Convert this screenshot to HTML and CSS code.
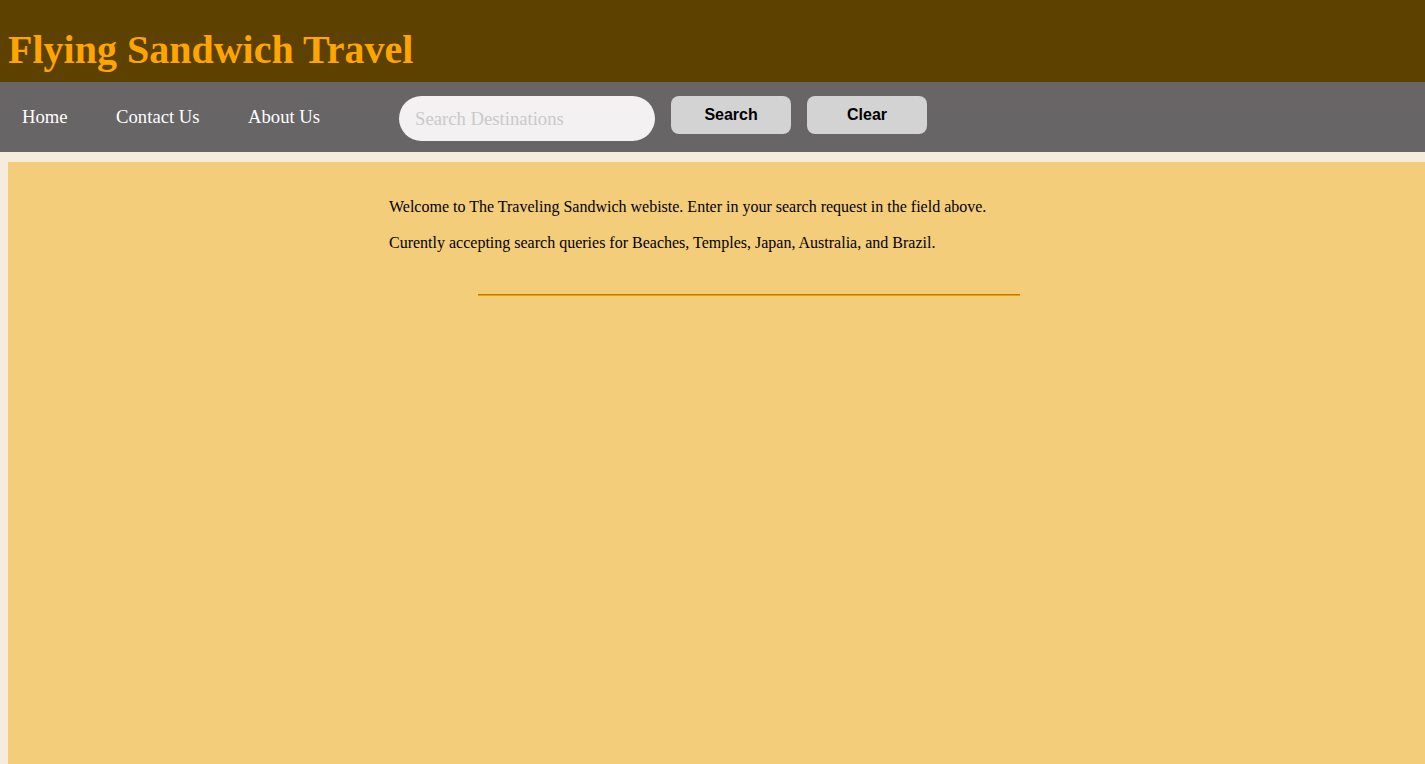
FILE: index.html
```html
<!DOCTYPE html>
<html lang="en">
<head>
<meta charset="utf-8">
<title>Flying Sandwich Travel</title>
<link rel="stylesheet" href="styles.css">
</head>
<body>
<header class="site-header">
  <h1 class="site-title">Flying Sandwich Travel</h1>
</header>
<nav class="navbar">
  <div class="nav-links">
    <a class="nav-link" href="#">Home</a>
    <a class="nav-link" href="#">Contact Us</a>
    <a class="nav-link" href="#">About Us</a>
  </div>
  <input class="search-input" type="text" placeholder="Search Destinations">
  <button class="btn" type="button">Search</button>
  <button class="btn" type="button">Clear</button>
</nav>
<main class="main">
  <div class="content">
    <p class="intro">Welcome to The Traveling Sandwich webiste. Enter in your search request in the field above.</p>
    <p class="intro">Curently accepting search queries for Beaches, Temples, Japan, Australia, and Brazil.</p>
    <hr class="divider">
  </div>
</main>
</body>
</html>
```
FILE: styles.css
```css
html, body {
  margin: 0;
  padding: 0;
  height: 100%;
}
body {
  background: #f5ecdc;
  font-family: "Liberation Serif", "Times New Roman", serif;
  overflow: hidden;
}
.site-header {
  background: #5d4100;
  height: 82px;
  box-sizing: border-box;
  padding: 27px 0 0 8px;
}
.site-title {
  margin: 0;
  font-size: 40px;
  font-weight: bold;
  line-height: 46px;
  color: #ffa500;
}
.navbar {
  background: #676566;
  height: 70px;
  box-sizing: border-box;
  padding: 14px 0 0 22px;
  display: flex;
  align-items: flex-start;
}
.nav-links {
  display: flex;
  gap: 48.5px;
  height: 42px;
  align-items: center;
  margin-right: 79px;
}
.nav-link {
  color: #ffffff;
  text-decoration: none;
  font-size: 18.67px;
}
.search-input {
  width: 256px;
  height: 45px;
  box-sizing: border-box;
  border: none;
  border-radius: 23px;
  background: #f3f1f2;
  padding: 0 16px;
  font-family: "Liberation Serif", "Times New Roman", serif;
  font-size: 18.67px;
  outline: none;
  margin-right: 16px;
}
.search-input::placeholder {
  color: #cbc9ca;
}
.btn {
  width: 120px;
  height: 38px;
  border: none;
  border-radius: 8px;
  background: #d3d3d3;
  color: #000;
  font-family: "Liberation Sans", Arial, sans-serif;
  font-weight: bold;
  font-size: 16px;
  margin-right: 16px;
  padding: 0;
}
.main {
  background: #f4cd7b;
  margin: 10px 0 0 8px;
  height: calc(100% - 162px);
  padding-top: 20px;
  box-sizing: border-box;
}
.content {
  margin-left: 381px;
}
.intro {
  margin: 18px 0 17px;
  font-size: 16px;
  color: #000;
}
.intro:first-child {
  margin-top: 16px;
}
.divider {
  margin: 42px 0 0 89px;
  width: 542px;
  height: 0;
  border: none;
  border-top: 1px solid #c07800;
  border-bottom: 1px solid #f0a000;
}
```
